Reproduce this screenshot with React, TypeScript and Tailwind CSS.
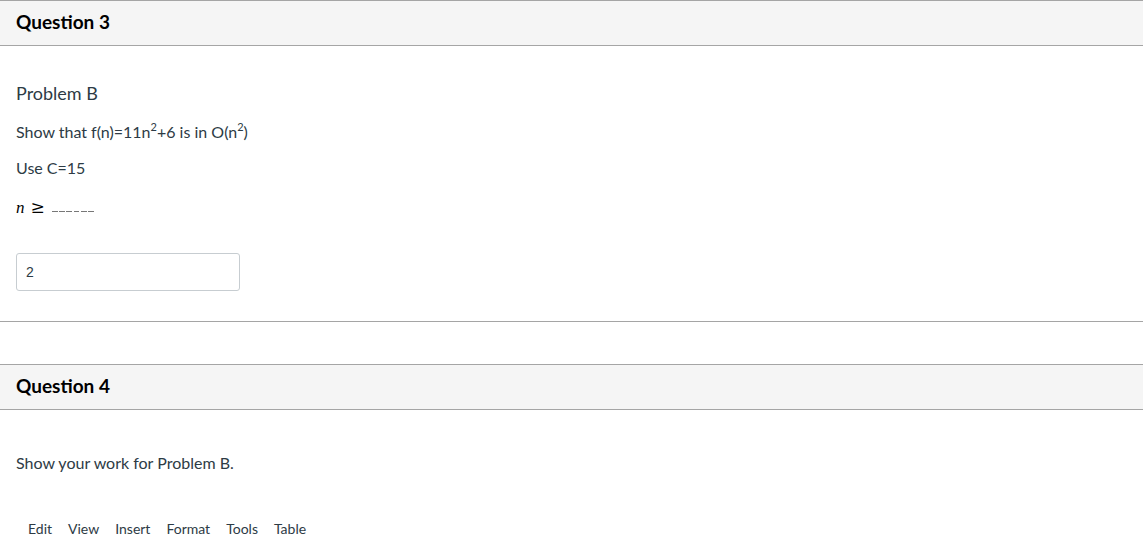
import React from "react";

function Header({ title }: { title: string }) {
  return (
    <div className="h-[46px] bg-[#f5f5f5] border-t border-b border-[#a5a5a5] flex items-center px-4 pb-[4px]">
      <span className="text-[19px] font-bold text-[#000000] leading-none">{title}</span>
    </div>
  );
}

export default function App() {
  return (
    <div className="w-[1143px] h-[534px] overflow-hidden bg-white text-[#2d3b45]" style={{ fontFamily: "Lato, 'Open Sans', sans-serif" }}>
      <Header title="Question 3" />
      <div className="px-4 pt-[38px] pb-[30px] border-b border-[#a5a5a5]">
        <p className="text-[18px] leading-[18px] text-[#2d3b45]">Problem B</p>
        <p className="text-[16px] leading-[18px] mt-[21px]">
          Show that f(n)=11n<sup className="text-[11px] -top-[0.6em]">2</sup>+6 is in O(n<sup className="text-[11px] -top-[0.6em]">2</sup>)
        </p>
        <p className="text-[16px] leading-[18px] mt-[18px]">Use C=15</p>
        <div className="h-[18px] mt-[21px] flex items-center">
          <span className="italic text-[17px] text-[#000] leading-none" style={{ fontFamily: "'Liberation Serif', serif" }}>n</span>
          <span className="ml-[6px] text-[17px] text-[#000] leading-none" style={{ fontFamily: "'DejaVu Serif', serif" }}>≥</span>
          <span className="ml-[7px] mt-[8px] flex gap-[1.5px]">
            {[0, 1, 2, 3, 4, 5].map((i) => (
              <span key={i} className="block w-[5.8px] h-[1px] bg-[#777]" />
            ))}
          </span>
        </div>
        <div className="mt-[37px] w-[224px] h-[38px] border border-[#c7cdd1] rounded-[3px] flex items-center px-[9px]">
          <span className="text-[14px] text-[#2d3b45]" style={{ fontFamily: "'Liberation Sans', sans-serif" }}>2</span>
        </div>
      </div>
      <div className="h-[42px]" />
      <Header title="Question 4" />
      <div className="px-4 pt-[44px]">
        <p className="text-[16px] leading-[18px]">Show your work for Problem B.</p>
        <div className="mt-[48px] flex pl-[12px] text-[14px] text-[#2d3b45] leading-[18px]">
          {["Edit", "View", "Insert", "Format", "Tools", "Table"].map((m) => (
            <span key={m} className="mr-[16px]">{m}</span>
          ))}
        </div>
      </div>
    </div>
  );
}
